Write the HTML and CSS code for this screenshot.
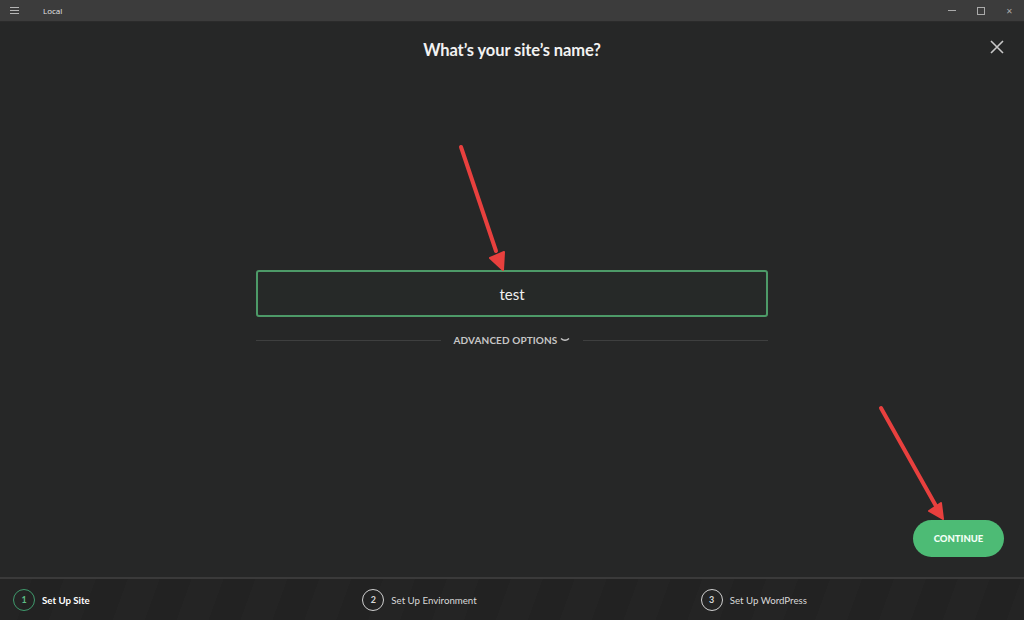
FILE: index.html
```html
<!DOCTYPE html>
<html lang="en">
<head>
  <meta charset="UTF-8" />
  <title>Local</title>
  <link rel="stylesheet" href="styles.css">
</head>
<body>
  <div class="titlebar">
    <div class="tb-left">
      <span class="menu-icon"><i></i><i></i><i></i></span>
      <span class="app-name">Local</span>
    </div>
    <div class="tb-controls">
      <span class="ctl min"></span>
      <span class="ctl max"></span>
      <span class="ctl close">&#x2715;</span>
    </div>
  </div>

  <main class="content">
    <h1 class="heading">What’s your site’s name?</h1>
    <button class="close-btn" aria-label="Close">
      <svg width="14" height="14" viewBox="0 0 14 14"><path d="M1 1L13 13M13 1L1 13" stroke="#c8c8c8" stroke-width="1.6" /></svg>
    </button>

    <div class="form">
      <div class="name-input">test</div>
      <div class="advanced">
        <span class="rule"></span>
        <span class="adv-label">ADVANCED OPTIONS
          <svg width="10" height="6" viewBox="0 0 10 6"><path d="M1 1.5Q5 5 9 1.5" stroke="#c6c6c6" stroke-width="1.5" fill="none" /></svg>
        </span>
        <span class="rule"></span>
      </div>
    </div>

    <div class="actions">
      <button class="continue">CONTINUE</button>
    </div>

    <svg class="arrows" width="1024" height="556" viewBox="0 0 1024 556">
      <g stroke="#e8403e" stroke-width="4" stroke-linecap="round" fill="#e8403e">
        <line x1="461" y1="125" x2="496" y2="229" />
        <polygon points="490,236 503,248 504,230" stroke-width="2" stroke-linejoin="round" />
        <line x1="881" y1="386" x2="936" y2="484" />
        <polygon points="929,489 943,497 941,481" stroke-width="2" stroke-linejoin="round" />
      </g>
    </svg>
  </main>

  <footer class="steps">
    <div class="step active"><span class="num">1</span><span class="label">Set Up Site</span></div>
    <div class="step"><span class="num">2</span><span class="label">Set Up Environment</span></div>
    <div class="step"><span class="num">3</span><span class="label">Set Up WordPress</span></div>
  </footer>
</body>
</html>
```

FILE: styles.css
```css
* {
  box-sizing: border-box;
}
body {
  margin: 0;
  width: 1024px;
  height: 620px;
  overflow: hidden;
  background: #262727;
  font-family: Lato, "Open Sans", sans-serif;
  color: #eee;
  display: flex;
  flex-direction: column;
}

/* Title bar */
.titlebar {
  height: 22px;
  background: #3c3c3c;
  border-bottom: 1px solid #2b2b2b;
  display: flex;
  justify-content: space-between;
  align-items: center;
}
.tb-left {
  display: flex;
  align-items: center;
}
.menu-icon {
  display: flex;
  flex-direction: column;
  gap: 2px;
  margin-left: 10px;
  width: 9px;
}
.menu-icon i {
  display: block;
  height: 1px;
  background: #b5b5b5;
}
.app-name {
  margin-left: 24px;
  font-family: "Open Sans", sans-serif;
  font-size: 8px;
  color: #e6e6e6;
}
.tb-controls {
  display: flex;
  align-items: center;
  height: 100%;
}
.ctl {
  width: 29px;
  height: 100%;
  display: flex;
  align-items: center;
  justify-content: center;
  font-size: 8px;
  color: #aaa;
}
.ctl.min::before {
  content: "";
  width: 8px;
  height: 1px;
  background: #aaa;
}
.ctl.max::before {
  content: "";
  width: 6px;
  height: 6px;
  border: 1px solid #aaa;
}

/* Main */
.content {
  position: relative;
  flex: 1;
  display: flex;
  flex-direction: column;
  align-items: center;
}
.heading {
  margin: 18px 0 0;
  font-size: 16.5px;
  font-weight: 700;
  color: #f2f2f2;
  line-height: 20px;
  letter-spacing: -0.1px;
}
.close-btn {
  position: absolute;
  top: 18px;
  right: 20px;
  background: none;
  border: none;
  padding: 0;
}
.form {
  margin-top: 210px;
  width: 512px;
}
.name-input {
  height: 47px;
  border: 2px solid #4d9a68;
  border-radius: 3px;
  background: #262928;
  display: flex;
  align-items: center;
  justify-content: center;
  font-size: 15px;
  color: #f0f0f0;
}
.advanced {
  display: flex;
  align-items: center;
  gap: 13px;
  margin-top: 13px;
  height: 20px;
}
.rule {
  flex: 1;
  height: 1px;
  background: #3e3f3f;
}
.adv-label {
  font-size: 10px;
  font-weight: 700;
  color: #c6c6c6;
  letter-spacing: 0.1px;
  display: flex;
  align-items: center;
  gap: 3px;
}
.actions {
  margin-top: auto;
  align-self: flex-end;
  margin-right: 20px;
  margin-bottom: 20px;
}
.continue {
  width: 91px;
  height: 37px;
  border: none;
  border-radius: 19px;
  background: #4dbb75;
  color: #f4fff7;
  font-family: Lato, sans-serif;
  font-size: 9.5px;
  font-weight: 900;
  letter-spacing: 0;
}
.arrows {
  position: absolute;
  top: 0;
  left: 0;
  pointer-events: none;
}

/* Steps footer */
.steps {
  height: 43px;
  border-top: 2px solid #3a3a3a;
  background: repeating-linear-gradient(110deg, #242424 0 30px, #222222 30px 60px);
  display: flex;
}
.step {
  flex: 1;
  display: flex;
  align-items: center;
  gap: 7px;
  padding-left: 13px;
  font-size: 9.7px;
  color: #d8d8d8;
}
.step:nth-child(2) {
  padding-left: 26px;
}
.step:nth-child(3) {
  padding-left: 15px;
}
.step.active {
  color: #fff;
  font-weight: 700;
}
.num {
  width: 22px;
  height: 22px;
  border: 1.5px solid #cfcfcf;
  border-radius: 50%;
  display: flex;
  align-items: center;
  justify-content: center;
  font-size: 9px;
  font-weight: 700;
}
.step.active .num {
  border-color: #3f9a6c;
  color: #5dbd84;
}
```
